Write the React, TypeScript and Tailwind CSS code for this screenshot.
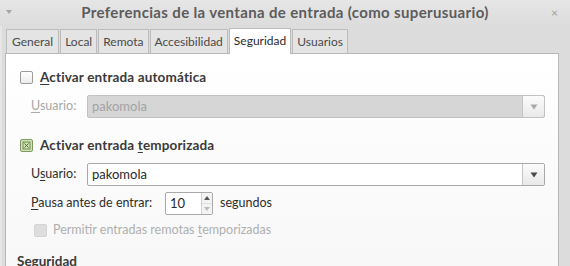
import React from "react";

const font = { fontFamily: 'Lato, "Noto Sans", sans-serif' };

function Arrow({ dark }: { dark?: boolean }) {
  return (
    <svg width="8" height="6" viewBox="0 0 8 6">
      <path d="M0.5 0.5 L7.5 0.5 L4 5.5 Z" fill={dark ? "#4a4a4a" : "#a8a8a8"} />
    </svg>
  );
}

function Combo({ disabled, text }: { disabled?: boolean; text: string }) {
  return (
    <div
      className={
        "w-[458px] h-[23px] flex border rounded-[2px] " +
        (disabled ? "bg-[#d6d6d6] border-[#c2c2c2]" : "bg-white border-[#a9a9a9]")
      }
    >
      <div className={"flex-1 flex items-center pl-[4px] text-[13px] " + (disabled ? "text-[#a3a3a3]" : "text-[#2a2a2a]")}>
        {text}
      </div>
      <div className="w-[22px] flex items-center justify-center border-l border-[#c4c4c4] bg-gradient-to-b from-[#fbfbfb] to-[#e9e9e9] rounded-r-[2px]">
        <Arrow dark={!disabled} />
      </div>
    </div>
  );
}

const tab = "h-[24px] px-[4px] flex items-center bg-[#e4e4e4] border border-b-0 border-[#bcbcbc] mr-[1px] shrink-0";

export default function App() {
  return (
    <div className="w-[570px] h-[266px] overflow-hidden bg-[#dcdcdc] flex flex-col" style={font}>
      {/* Title bar */}
      <div className="h-[26px] shrink-0 relative flex items-center justify-center bg-gradient-to-b from-[#e6e6e6] to-[#dcdcdc]">
        <div className="absolute left-[5px] top-[9px]">
          <svg width="8" height="6" viewBox="0 0 8 6">
            <path d="M1 1 L7 1 L4 5 Z" fill="#a5a5a5" />
          </svg>
        </div>
        <div className="text-[15px] font-bold text-[#5c5c5c] tracking-[0.35px] mt-[-2px]">
          Preferencias de la ventana de entrada (como superusuario)
        </div>
        <div className="absolute right-[12px] top-[4px] text-[12px] text-[#a0a0a0]">×</div>
      </div>

      {/* Body */}
      <div className="shrink-0 flex flex-col pl-[3px] pr-[11px] pt-[1px] border-l-[2px] border-[#e6e6e6]">
        {/* Tabs */}
        <div className="flex items-end h-[26px] shrink-0 pl-[1px] text-[12px] text-[#4a4a4a]">
          <div className={tab + " px-[5px]"}>General</div>
          <div className={tab}>Local</div>
          <div className={tab + " px-[3px]"}>Remota</div>
          <div className={tab + " px-[3px]"}>Accesibilidad</div>
          <div className="h-[26px] px-[4px] flex items-center bg-white border border-b-0 border-[#bcbcbc] mr-[1px] text-[#2a2a2a] mb-[-1px] relative z-10 pb-[2px] shrink-0">Seguridad</div>
          <div className={tab + " px-[3px]"}>Usuarios</div>
        </div>

        {/* Panel */}
        <div className="h-[260px] shrink-0 bg-gradient-to-b from-white to-[#f6f6f6] border border-[#b8b8b8] pl-[14px] pt-[13px] flex flex-col text-[12.5px]">
          {/* Row 1 */}
          <div className="h-[20px] flex items-center">
            <div className="w-[13px] h-[13px] border border-[#9c9c9c] rounded-[2px] bg-gradient-to-b from-white to-[#ececec]" />
            <div className="ml-[7px] font-bold text-[13.5px] tracking-[0.15px] text-[#3a3a3a]">
              <span className="underline underline-offset-2">A</span>ctivar entrada automática
            </div>
          </div>
          {/* Row 2 */}
          <div className="h-[23px] mt-[8px] flex items-center pl-[11px]">
            <div className="w-[56px] text-[#a8a8a8]">
              <span className="underline underline-offset-2">U</span>suario:
            </div>
            <Combo disabled text="pakomola" />
          </div>
          {/* Row 3 */}
          <div className="h-[20px] mt-[17px] flex items-center">
            <div className="w-[13px] h-[13px] border border-[#7f9a62] rounded-[2px] bg-[#cfe3b4] flex items-center justify-center">
              <svg width="9" height="9" viewBox="0 0 9 9">
                <rect x="1" y="1" width="7" height="7" fill="none" stroke="#6f8c52" strokeWidth="1" />
                <path d="M2.5 2.5 L6.5 6.5 M6.5 2.5 L2.5 6.5" stroke="#4f6d33" strokeWidth="1" />
              </svg>
            </div>
            <div className="ml-[7px] font-bold text-[13.5px] tracking-[0.15px] text-[#3a3a3a]">
              Activar entrada <span className="underline underline-offset-2">t</span>emporizada
            </div>
          </div>
          {/* Row 4 */}
          <div className="h-[23px] mt-[8px] flex items-center pl-[11px]">
            <div className="w-[56px] text-[#2e2e2e]">
              U<span className="underline underline-offset-2">s</span>uario:
            </div>
            <Combo text="pakomola" />
          </div>
          {/* Row 5 */}
          <div className="h-[23px] mt-[6px] flex items-center pl-[11px]">
            <div className="w-[134px] whitespace-nowrap text-[#2e2e2e]">
              <span className="underline underline-offset-2">P</span>ausa antes de entrar:
            </div>
            <div className="w-[48px] h-[23px] flex border border-[#a9a9a9] rounded-[2px] bg-white">
              <div className="flex-1 flex items-center pl-[4px] text-[13px] text-[#2a2a2a]">10</div>
              <div className="w-[11px] flex flex-col border-l border-[#d0d0d0] bg-[#f3f3f3]">
                <div className="flex-1 flex items-center justify-center">
                  <svg width="6" height="4" viewBox="0 0 6 4"><path d="M0 4 L3 0 L6 4 Z" fill="#555" /></svg>
                </div>
                <div className="flex-1 flex items-center justify-center border-t border-[#e0e0e0]">
                  <svg width="6" height="4" viewBox="0 0 6 4"><path d="M0 0 L3 4 L6 0 Z" fill="#bbb" /></svg>
                </div>
              </div>
            </div>
            <div className="ml-[7px] text-[#2e2e2e]">segundos</div>
          </div>
          {/* Row 6 */}
          <div className="h-[20px] mt-[5px] flex items-center pl-[14px]">
            <div className="w-[13px] h-[13px] border border-[#d4d4d4] rounded-[2px] bg-[#dedede]" />
            <div className="ml-[6px] text-[#b0b0b0]">
              Permitir entradas remotas <span className="underline underline-offset-2">t</span>emporizadas
            </div>
          </div>
          {/* Row 7 */}
          <div className="mt-[11px] ml-[-3px] font-bold text-[13.5px] text-[#3a3a3a]">Seguridad</div>
        </div>
      </div>
    </div>
  );
}
